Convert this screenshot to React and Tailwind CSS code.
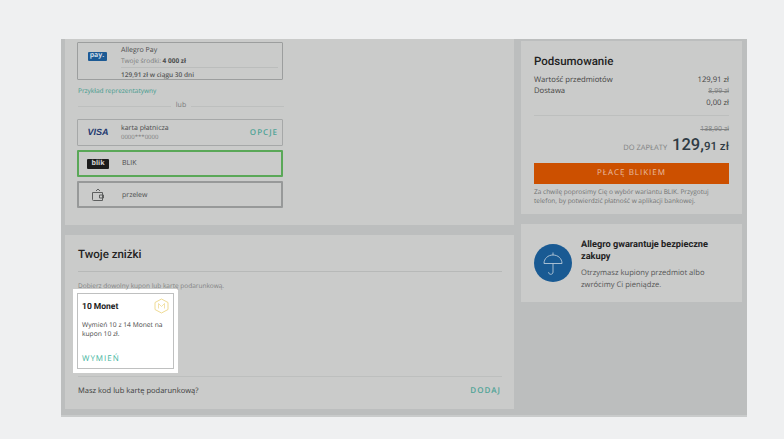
const sans = "font-['Open_Sans',sans-serif]";
const head = "font-['Roboto',sans-serif]";

// logo monet - szesciokat z litera M
const MonetIcon = () => (
  <svg width="15" height="16" viewBox="0 0 15 16" fill="none" stroke="#efdb94" strokeWidth="1">
    <path d="M7.5 1 L14 4.5 V11.5 L7.5 15 L1 11.5 V4.5 Z" />
    <path d="M4.5 10.5 V5.5 L7.5 8.5 L10.5 5.5 V10.5" strokeWidth="0.8" />
  </svg>
);

const WalletIcon = () => (
  <svg width="14" height="14" viewBox="0 0 14 14" fill="none" stroke="#5d5f5f" strokeWidth="1">
    <path d="M1.5 4.5 H11.5 V12.5 H2.5 Q1.5 12.5 1.5 11.5 Z" />
    <path d="M8.5 7 H12.5 V10 H8.5 Z" />
    <path d="M5 3 L7 1 L9 3" />
  </svg>
);

const UmbrellaIcon = () => (
  <svg width="20" height="23" viewBox="0 0 20 23" fill="none" stroke="#b5c8d8" strokeWidth="0.9">
    <path d="M10 0.5 V3" />
    <path d="M1 11.5 C1 6.5 5 3 10 3 C15 3 19 6.5 19 11.5 Z" />
    <path d="M10 11.5 V20 C10 21.5 9 22.3 7.8 22.3 C6.5 22.3 5.6 21.5 5.6 20.2" />
  </svg>
);

const PayCard = ({ logo, border, children, right }) => (
  <div className={`flex items-center w-[206px] h-[27px] rounded-[1px] ${border}`}>
    <div className="w-[43px] pr-[5px] flex justify-center shrink-0">{logo}</div>
    <div className="flex-1 min-w-0">{children}</div>
    {right}
  </div>
);

export default function App() {
  return (
    <div className={`w-[784px] h-[439px] bg-[#eff0f1] pt-[39px] pl-[61px] overflow-hidden [text-rendering:geometricPrecision] ${sans}`}>
      <div className="w-[686px] h-[378px] bg-[#bcbebe] border-b-2 border-[#c9cbcb] flex gap-[7px] pl-[4px]">
        {/* lewa kolumna */}
        <div className="w-[449px] flex flex-col gap-[10px]">
          <div className="h-[186px] bg-[#cacbca] px-[13px] pt-[3px]">
            <div className="-ml-[1px] w-[206px] h-[38px] border border-[#9c9e9e] rounded-[1px] flex">
              <div className="w-[43px] pr-[5px] flex justify-center pt-[9px] shrink-0">
                <div className="w-[19px] h-[9px] bg-[#1c5a94] rounded-[1px] text-[7px] leading-[8px] font-bold text-center text-[#cdd9e4]">pay.</div>
              </div>
              <div className="flex-1 pr-[4px] pt-[3px]">
                <div className="text-[7px] leading-[10px] text-[#4b4c4c]">Allegro Pay</div>
                <div className="text-[6.5px] leading-[9px] text-[#7a7c7c]">
                  Twoje środki: <span className="font-bold text-[#4b4c4c]">4 000 zł</span>
                </div>
                <div className="mt-[2px] border-t border-[#bbbdbc] pt-[2px] text-[6.5px] leading-[9px] font-semibold text-[#555656]">
                  129,91 zł w ciągu 30 dni
                </div>
              </div>
            </div>
            <div className="mt-[6px] text-[6.5px] leading-[10px] text-[#3f9a8c]">Przykład reprezentatywny</div>
            <div className="mt-[5px] w-[206px] flex items-center gap-[5px] text-[7px] leading-[10px] text-[#787a7a]">
              <div className="flex-1 border-t border-[#bdbfbe]" />
              lub
              <div className="flex-1 border-t border-[#bdbfbe]" />
            </div>
            <div className="-ml-[1px] mt-[8px] flex flex-col gap-[4px]">
              <PayCard
                border="border border-[#a6a8a8]"
                logo={<span className="pl-[2px] text-[9px] font-bold italic text-[#23396f] font-['Liberation_Sans',sans-serif]">VISA</span>}
                right={<span className="pr-[4px] text-[8px] font-semibold tracking-[1px] text-[#4fa396]">OPCJE</span>}
              >
                <div className="text-[7px] leading-[9px] text-[#4b4c4c]">karta płatnicza</div>
                <div className="text-[6px] leading-[8px] text-[#7a7c7c]">0000***0000</div>
              </PayCard>
              <PayCard
                border="border-2 border-[#5aa858]"
                logo={<div className="w-[22px] h-[10px] bg-[#1c1c1c] rounded-[1px] text-[7px] leading-[10px] text-center font-bold text-[#d8d8d8]">blik</div>}
              >
                <div className="pt-[2px] text-[7px] text-[#4b4c4c]">BLIK</div>
              </PayCard>
              <PayCard border="border-2 border-[#979999]" logo={<WalletIcon />}>
                <div className="pt-[3px] text-[7px] text-[#4b4c4c]">przelew</div>
              </PayCard>
            </div>
          </div>

          <div className="h-[174px] bg-[#cacbca] px-[13px] pt-[12px]">
            <div className={`text-[11.5px] leading-[14px] font-medium text-[#222] ${head}`}>Twoje zniżki</div>
            <div className="mt-[10px] w-[424px] border-t border-[#b7b9b8]" />
            <div className="mt-[9px] text-[6.5px] leading-[9px] text-[#808282]">Dobierz dowolny kupon lub kartę podarunkową.</div>
            {/* karta kuponu na jasnej podkladce */}
            <div className="-ml-[5px] -mt-[1px] w-[105px] h-[84px] bg-white p-[4px]">
              <div className="h-full border border-[#bfc0c0] px-[4px] pt-[4px] flex flex-col">
                <div className="flex justify-between items-start">
                  <span className={`mt-[4px] text-[8.5px] leading-[10px] font-bold text-[#222] ${head}`}>10 Monet</span>
                  <MonetIcon />
                </div>
                <div className="mt-[6px] text-[6.7px] leading-[9px] text-[#444]">Wymień 10 z 14 Monet na kupon 10 zł.</div>
                <div className="mt-auto mb-[4px] text-[8px] leading-[10px] tracking-[1px] text-[#3fb5a0]">WYMIEŃ</div>
              </div>
            </div>
            <div className="mt-[3px] w-[424px] border-t border-[#bdbfbe] pt-[8px] pr-[1px] flex justify-between items-center">
              <span className="text-[7.55px] leading-[12px] text-[#3c3d3d]">Masz kod lub kartę podarunkową?</span>
              <span className="text-[8px] font-semibold tracking-[1px] text-[#4fa396]">DODAJ</span>
            </div>
          </div>
        </div>

        {/* prawa kolumna */}
        <div className="w-[221px] pt-[2px] flex flex-col gap-[10px]">
          <div className="h-[173px] bg-[#cacbca] px-[13px] pt-[13px]">
            <div className={`text-[11.5px] leading-[15px] font-medium text-[#222] ${head}`}>Podsumowanie</div>
            <div className="mt-[5.5px] flex justify-between text-[7.7px] leading-[11.5px] text-[#444]">
              <span>Wartość przedmiotów</span>
              <span>129,91 zł</span>
            </div>
            <div className="flex justify-between text-[7.7px] leading-[11.5px] text-[#444]">
              <span>Dostawa</span>
              <span className="text-[7px] line-through text-[#808282]">8,99 zł</span>
            </div>
            <div className="text-right text-[7.7px] leading-[11.5px] text-[#444]">0,00 zł</div>
            <div className="mt-[5.5px] border-t border-[#bdbfbe]" />
            <div className="mt-[9px] text-right text-[7px] leading-[10px] line-through text-[#808282]">138,90 zł</div>
            <div className="flex justify-end items-baseline gap-[5px] text-[#2f3b44] leading-[20px]">
              <span className="text-[7.5px] text-[#808282]">DO ZAPŁATY</span>
              <span className={`${head} font-medium`}>
                <span className="text-[16.5px]">129,</span>
                <span className="text-[11.5px]">91 zł</span>
              </span>
            </div>
            <div className="mt-[5px] h-[21px] bg-[#cc5000] flex items-center justify-center text-[8px] tracking-[1px] text-[#e9bfa3]">
              PŁACĘ BLIKIEM
            </div>
            <div className="mt-[3px] text-[6.5px] leading-[9px] text-[#707272]">
              Za chwilę poprosimy Cię o wybór wariantu BLIK. Przygotuj telefon, by potwierdzić płatność w aplikacji bankowej.
            </div>
          </div>
          <div className="h-[78px] bg-[#cacbca] pl-[13px] pr-[8px] flex items-center gap-[9px]">
            <div className="w-[38px] h-[38px] rounded-full bg-[#195a93] flex items-center justify-center shrink-0">
              <UmbrellaIcon />
            </div>
            <div className="pt-[4px]">
              <div className={`text-[9.2px] leading-[12px] font-bold text-[#222] ${head}`}>Allegro gwarantuje bezpieczne zakupy</div>
              <div className="mt-[4px] text-[7.6px] leading-[12px] text-[#555]">Otrzymasz kupiony przedmiot albo zwrócimy Ci pieniądze.</div>
            </div>
          </div>
        </div>
      </div>
    </div>
  );
}
